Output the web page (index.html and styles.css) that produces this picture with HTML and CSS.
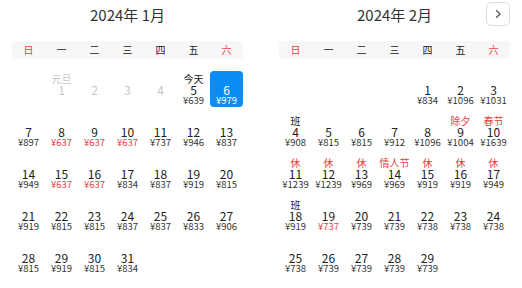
FILE: index.html
```html
<!DOCTYPE html>
<html lang="zh">
<head>
<meta charset="utf-8">
<link rel="stylesheet" href="styles.css">
</head>
<body>
<div class="picker">
  <section class="month">
    <header class="head">
      <span></span>
      <h2 class="title">2024年 1月</h2>
      <span></span>
    </header>
    <div class="week">
      <span class="we">日</span><span>一</span><span>二</span><span>三</span><span>四</span><span>五</span><span class="we">六</span>
    </div>
    <div class="days">
      <div class="day empty"></div>
      <div class="day off"><span class="tag">元旦</span><span class="num">1</span><span class="price"></span></div>
      <div class="day off"><span class="tag"></span><span class="num">2</span><span class="price"></span></div>
      <div class="day off"><span class="tag"></span><span class="num">3</span><span class="price"></span></div>
      <div class="day off"><span class="tag"></span><span class="num">4</span><span class="price"></span></div>
      <div class="day"><span class="tag">今天</span><span class="num">5</span><span class="price">¥639</span></div>
      <div class="day sel"><span class="tag"></span><span class="num">6</span><span class="price">¥979</span></div>

      <div class="day"><span class="tag"></span><span class="num">7</span><span class="price">¥897</span></div>
      <div class="day"><span class="tag"></span><span class="num">8</span><span class="price low">¥637</span></div>
      <div class="day"><span class="tag"></span><span class="num">9</span><span class="price low">¥637</span></div>
      <div class="day"><span class="tag"></span><span class="num">10</span><span class="price low">¥637</span></div>
      <div class="day"><span class="tag"></span><span class="num">11</span><span class="price">¥737</span></div>
      <div class="day"><span class="tag"></span><span class="num">12</span><span class="price">¥946</span></div>
      <div class="day"><span class="tag"></span><span class="num">13</span><span class="price">¥837</span></div>

      <div class="day"><span class="tag"></span><span class="num">14</span><span class="price">¥949</span></div>
      <div class="day"><span class="tag"></span><span class="num">15</span><span class="price low">¥637</span></div>
      <div class="day"><span class="tag"></span><span class="num">16</span><span class="price low">¥637</span></div>
      <div class="day"><span class="tag"></span><span class="num">17</span><span class="price">¥834</span></div>
      <div class="day"><span class="tag"></span><span class="num">18</span><span class="price">¥837</span></div>
      <div class="day"><span class="tag"></span><span class="num">19</span><span class="price">¥919</span></div>
      <div class="day"><span class="tag"></span><span class="num">20</span><span class="price">¥815</span></div>

      <div class="day"><span class="tag"></span><span class="num">21</span><span class="price">¥919</span></div>
      <div class="day"><span class="tag"></span><span class="num">22</span><span class="price">¥815</span></div>
      <div class="day"><span class="tag"></span><span class="num">23</span><span class="price">¥815</span></div>
      <div class="day"><span class="tag"></span><span class="num">24</span><span class="price">¥837</span></div>
      <div class="day"><span class="tag"></span><span class="num">25</span><span class="price">¥837</span></div>
      <div class="day"><span class="tag"></span><span class="num">26</span><span class="price">¥833</span></div>
      <div class="day"><span class="tag"></span><span class="num">27</span><span class="price">¥906</span></div>

      <div class="day"><span class="tag"></span><span class="num">28</span><span class="price">¥815</span></div>
      <div class="day"><span class="tag"></span><span class="num">29</span><span class="price">¥919</span></div>
      <div class="day"><span class="tag"></span><span class="num">30</span><span class="price">¥815</span></div>
      <div class="day"><span class="tag"></span><span class="num">31</span><span class="price">¥834</span></div>
    </div>
  </section>

  <section class="month">
    <header class="head">
      <span></span>
      <h2 class="title">2024年 2月</h2>
      <button class="next" type="button" aria-label="下个月">
        <svg width="10" height="10" viewBox="0 0 10 10"><path d="M3.2 1.2 L7 5 L3.2 8.8" fill="none" stroke="#555" stroke-width="1.3"/></svg>
      </button>
    </header>
    <div class="week">
      <span class="we">日</span><span>一</span><span>二</span><span>三</span><span>四</span><span>五</span><span class="we">六</span>
    </div>
    <div class="days">
      <div class="day empty"></div>
      <div class="day empty"></div>
      <div class="day empty"></div>
      <div class="day empty"></div>
      <div class="day"><span class="tag"></span><span class="num">1</span><span class="price">¥834</span></div>
      <div class="day"><span class="tag"></span><span class="num">2</span><span class="price">¥1096</span></div>
      <div class="day"><span class="tag"></span><span class="num">3</span><span class="price">¥1031</span></div>

      <div class="day"><span class="tag">班</span><span class="num">4</span><span class="price">¥908</span></div>
      <div class="day"><span class="tag"></span><span class="num">5</span><span class="price">¥815</span></div>
      <div class="day"><span class="tag"></span><span class="num">6</span><span class="price">¥815</span></div>
      <div class="day"><span class="tag"></span><span class="num">7</span><span class="price">¥912</span></div>
      <div class="day"><span class="tag"></span><span class="num">8</span><span class="price">¥1096</span></div>
      <div class="day"><span class="tag red">除夕</span><span class="num">9</span><span class="price">¥1004</span></div>
      <div class="day"><span class="tag red">春节</span><span class="num">10</span><span class="price">¥1639</span></div>

      <div class="day"><span class="tag red">休</span><span class="num">11</span><span class="price">¥1239</span></div>
      <div class="day"><span class="tag red">休</span><span class="num">12</span><span class="price">¥1239</span></div>
      <div class="day"><span class="tag red">休</span><span class="num">13</span><span class="price">¥969</span></div>
      <div class="day"><span class="tag red">情人节</span><span class="num">14</span><span class="price">¥969</span></div>
      <div class="day"><span class="tag red">休</span><span class="num">15</span><span class="price">¥919</span></div>
      <div class="day"><span class="tag red">休</span><span class="num">16</span><span class="price">¥919</span></div>
      <div class="day"><span class="tag red">休</span><span class="num">17</span><span class="price">¥949</span></div>

      <div class="day"><span class="tag">班</span><span class="num">18</span><span class="price">¥919</span></div>
      <div class="day"><span class="tag"></span><span class="num">19</span><span class="price low">¥737</span></div>
      <div class="day"><span class="tag"></span><span class="num">20</span><span class="price">¥739</span></div>
      <div class="day"><span class="tag"></span><span class="num">21</span><span class="price">¥739</span></div>
      <div class="day"><span class="tag"></span><span class="num">22</span><span class="price">¥738</span></div>
      <div class="day"><span class="tag"></span><span class="num">23</span><span class="price">¥738</span></div>
      <div class="day"><span class="tag"></span><span class="num">24</span><span class="price">¥738</span></div>

      <div class="day"><span class="tag"></span><span class="num">25</span><span class="price">¥738</span></div>
      <div class="day"><span class="tag"></span><span class="num">26</span><span class="price">¥739</span></div>
      <div class="day"><span class="tag"></span><span class="num">27</span><span class="price">¥739</span></div>
      <div class="day"><span class="tag"></span><span class="num">28</span><span class="price">¥739</span></div>
      <div class="day"><span class="tag"></span><span class="num">29</span><span class="price">¥739</span></div>
    </div>
  </section>
</div>
</body>
</html>
```

FILE: styles.css
```css
* { box-sizing: border-box; }
html, body { margin: 0; padding: 0; background: #fff; }
body {
  font-family: "Noto Sans CJK SC", "Noto Sans", sans-serif;
  color: #222;
  width: 522px;
  height: 288px;
  overflow: hidden;
}
.picker {
  display: flex;
  gap: 36px;
  padding: 0 12px;
}
.month {
  width: 231px;
  display: flex;
  flex-direction: column;
}
.head {
  display: grid;
  grid-template-columns: 1fr auto 1fr;
  align-items: center;
  height: 28px;
  padding-top: 2px;
}
.title {
  margin: 0;
  font-size: 15px;
  font-weight: normal;
  line-height: 24px;
  color: #333;
}
.next {
  justify-self: end;
  width: 24px;
  height: 24px;
  margin: 0;
  padding: 0;
  border: 1px solid #dcdcdc;
  border-radius: 5px;
  background: #fff;
  display: flex;
  align-items: center;
  justify-content: center;
  margin-top: -2px;
}
.next svg { display: block; }
.week {
  margin-top: 13px;
  height: 18px;
  display: grid;
  grid-template-columns: repeat(7, 33px);
  background: #f7f7f8;
  border-radius: 4px;
  font-size: 10px;
  line-height: 18px;
  text-align: center;
  color: #222;
}
.week .we { color: #e8403f; }
.days {
  margin-top: 12px;
  display: grid;
  grid-template-columns: repeat(7, 33px);
  grid-auto-rows: 36px;
  row-gap: 6px;
}
.day {
  display: flex;
  flex-direction: column;
  align-items: center;
  padding-top: 2px;
  border-radius: 4px;
  text-align: center;
  white-space: nowrap;
}
.tag {
  height: 11px;
  font-size: 10px;
  line-height: 11px;
  color: #222;
}
.tag.red { color: #e8403f; }
.num {
  height: 11px;
  font-size: 12px;
  line-height: 11px;
}
.price {
  height: 10px;
  font-size: 9.5px;
  line-height: 10px;
  color: #333;
}
.price.low { color: #e8403f; }
.day.off .tag, .day.off .num { color: #c8c8c8; }
.day.sel {
  background: #0a8cf7;
  color: #fff;
}
.day.sel .num, .day.sel .price { color: #fff; }
```
